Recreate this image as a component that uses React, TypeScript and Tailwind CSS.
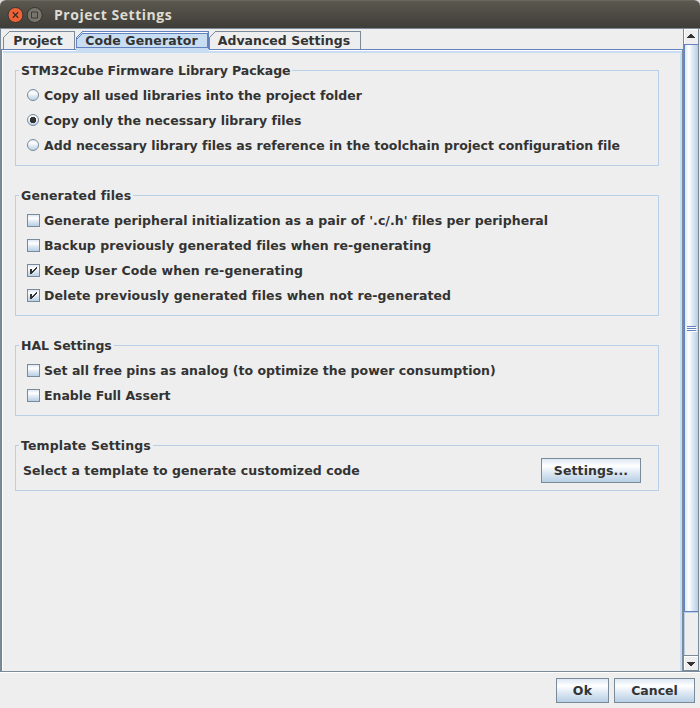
import type { ReactNode } from "react";

const metal = "bg-[linear-gradient(to_bottom,#dde8f3_0%,#ffffff_30%,#dde8f3_60%,#b8cfe5_100%)]";

function Group({ title, tracking, children }: { title: string; tracking: string; children: ReactNode }) {
  return (
    <fieldset className="w-[644px] border border-[#b8cfe5] pt-[5px] pb-[7px]">
      <legend className={`ml-[3px] h-[15px] px-[2px] leading-[15px] ${tracking}`}>{title}</legend>
      {children}
    </fieldset>
  );
}

function Radio({ label, tracking, on = false }: { label: string; tracking: string; on?: boolean }) {
  return (
    <label className="flex h-[25px] items-center pl-[11px] leading-[25px]">
      <svg width="12" height="12" viewBox="0 0 12 12" className="mr-[5px] mb-px shrink-0">
        <defs>
          <linearGradient id="radioFill" x1="0" y1="0" x2="0" y2="1">
            <stop offset="0" stopColor="#dde8f3" />
            <stop offset="0.3" stopColor="#ffffff" />
            <stop offset="0.6" stopColor="#dde8f3" />
            <stop offset="1" stopColor="#b8cfe5" />
          </linearGradient>
        </defs>
        <circle cx="6" cy="6" r="5.5" fill="url(#radioFill)" stroke="#7a8a99" />
        {on && <path d="M4 3h4v1h1v4h-1v1h-4v-1h-1v-4h1z" fill="#333" shapeRendering="crispEdges" />}
      </svg>
      <span className={tracking}>{label}</span>
    </label>
  );
}

function Check({ label, tracking, on = false }: { label: string; tracking: string; on?: boolean }) {
  return (
    <label className="flex h-[25px] items-center pl-[11px] leading-[25px]">
      <span className={`mr-[4px] h-[13px] w-[13px] shrink-0 border border-[#7a8a99] ${metal}`}>
        {on && (
          <svg className="block" width="11" height="11" viewBox="0 0 11 11" shapeRendering="crispEdges" fill="#333">
            <path d="M2 4h2v5H2zM8 2h1v2H8zM7 3h1v2H7zM6 4h1v2H6zM5 5h1v2H5zM4 6h1v2H4z" />
          </svg>
        )}
      </span>
      <span className={tracking}>{label}</span>
    </label>
  );
}

function Button({ label, size }: { label: string; size: string }) {
  return (
    <button className={`h-[25px] border border-[#7a8a99] text-center leading-[23px] ${size} ${metal}`}>{label}</button>
  );
}

function Tab({ label, size }: { label: string; size: string }) {
  return (
    <div className={`relative h-[18px] border-t border-r border-[#7a8a99] pr-px text-center leading-[18px] ${size}`}>
      <svg className="absolute -top-px left-0" width="7" height="18" viewBox="0 0 7 18" shapeRendering="crispEdges">
        <path d="M0 0h6L0 6z" fill="#eee" />
        <path d="M.5 18V6.5L6.5 .5" fill="none" stroke="#7a8a99" />
      </svg>
      {label}
    </div>
  );
}

function ActiveTab({ label, size }: { label: string; size: string }) {
  return (
    <div className={`relative z-10 h-[20px] pt-px pr-[2px] text-center leading-[18px] ${size}`}>
      <svg className="absolute top-0 left-0" width="133" height="20" viewBox="0 0 133 20" shapeRendering="crispEdges" fill="none">
        <path d="M0 20V6L6 0H133V20z" fill="#c8ddf2" />
        <path d="M1.5 7.5L7.5 1.5H131" stroke="#fff" />
        <path d="M.5 17V6.5L6.5 .5H132.5V18" stroke="#6382bf" />
        <path d="M.5 16.5V8.5L6.5 2.5H131.5V16.5z" stroke="#6382bf" />
      </svg>
      <span className="relative">{label}</span>
    </div>
  );
}

export default function App() {
  return (
    <div className="flex h-[708px] w-[700px] flex-col overflow-hidden bg-[#eee] font-['DejaVu_Sans',sans-serif] text-[12.5px] font-bold whitespace-nowrap text-[#333]">
      <div className="bg-[#dadada]">
        <header className="flex h-7 items-center rounded-t-[6px] border-t border-[#6a675f] bg-[linear-gradient(to_bottom,#5b584f,#3e3d38)] pl-[7px]">
          <svg width="37" height="18" viewBox="0 0 37 18">
            <circle cx="8.5" cy="9" r="7.5" fill="#ef6136" stroke="#343330" />
            <path d="M5.8 6.3l5.4 5.4M11.2 6.3l-5.4 5.4" stroke="#3c302a" strokeWidth="1.3" />
            <circle cx="27.7" cy="9" r="7.5" fill="#77756c" stroke="#343330" />
            <path d="M24.5 6h6v6h-6z" fill="none" stroke="#3b3a36" />
          </svg>
          <span className="ml-[10px] font-['Open_Sans',sans-serif] text-[14px] leading-[20px] tracking-[0.53px] text-[#dfdbd2]">Project Settings</span>
        </header>
      </div>
      <main className="flex h-[644px] border-t border-b border-l border-[#7a8a99]">
        <section className="flex w-[682px] flex-col">
          <nav className="flex h-5 pt-[2px] pl-[2px]">
            <Tab label="Project" size="w-[72px] tracking-[-0.07px]" />
            <ActiveTab label="Code Generator" size="ml-px w-[133px] tracking-[0.11px]" />
            <Tab label="Advanced Settings" size="w-[152px]" />
          </nav>
          <div className="flex-1 border-t border-r border-l border-t-[#6382bf] border-r-[#7a8a99] border-l-[#6382bf]">
            <div className="h-full border-t border-l border-white">
              <div className="flex h-full flex-col gap-[22px] border-t-2 border-r-2 border-[#c8ddf2] pt-[10px] pl-[12px]">
                <Group title="STM32Cube Firmware Library Package" tracking="tracking-[-0.06px]">
                  <Radio label="Copy all used libraries into the project folder" tracking="tracking-[0.01px]" />
                  <Radio label="Copy only the necessary library files" tracking="tracking-[0.01px]" on />
                  <Radio label="Add necessary library files as reference in the toolchain project configuration file" tracking="tracking-[0.005px]" />
                </Group>
                <Group title="Generated files" tracking="tracking-[0.12px]">
                  <Check label="Generate peripheral initialization as a pair of '.c/.h' files per peripheral" tracking="tracking-[0.045px]" />
                  <Check label="Backup previously generated files when re-generating" tracking="tracking-[0.05px]" />
                  <Check label="Keep User Code when re-generating" tracking="tracking-[0.11px]" on />
                  <Check label="Delete previously generated files when not re-generated" tracking="tracking-[0.09px]" on />
                </Group>
                <Group title="HAL Settings" tracking="tracking-[-0.065px]">
                  <Check label="Set all free pins as analog (to optimize the power consumption)" tracking="tracking-[0.02px]" />
                  <Check label="Enable Full Assert" tracking="tracking-[-0.02px]" />
                </Group>
                <Group title="Template Settings" tracking="tracking-[0.12px]">
                  <div className="flex h-[25px] items-center justify-between pr-[17px] pl-[7px] leading-[25px]">
                    <span className="tracking-[0.065px]">Select a template to generate customized code</span>
                    <Button label="Settings..." size="w-[100px] tracking-[0.1px]" />
                  </div>
                </Group>
              </div>
            </div>
          </div>
        </section>
        <aside className="flex w-4 flex-col border-r border-l border-[#7a8a99]">
          <div className="h-[15px] border-t border-l border-white pt-[4px] pl-[2px]">
            <svg className="block" width="8" height="4" viewBox="0 0 8 4" shapeRendering="crispEdges"><path d="M3 0h2v1h1v1h1v1h1v1H0V3h1V2h1V1h1z" fill="#333" /></svg>
          </div>
          <div className="flex h-[568px] items-center border-t border-b border-l border-[#6382bf] bg-[linear-gradient(to_right,#dde8f3,#ffffff_30%,#dde8f3_60%,#b8cfe5)] pt-[2px] pl-[2px]">
            <svg width="10" height="6" viewBox="0 0 10 6" shapeRendering="crispEdges"><path d="M1 1h9v1H1zM1 3h9v1H1zM1 5h9v1H1z" fill="#fff" /><path d="M0 0h9v1H0zM0 2h9v1H0zM0 4h9v1H0z" fill="#6382bf" /></svg>
          </div>
          <div className="h-[43px] border-t border-l border-[#b8cfe5]" />
          <div className="flex-1 border-t border-b border-[#7a8a99]">
            <div className="h-full border-t border-l border-white pt-[5px] pl-[2px]">
              <svg className="block" width="8" height="4" viewBox="0 0 8 4" shapeRendering="crispEdges"><path d="M0 0h8v1H7v1H6v1H5v1H3V3H2V2H1V1H0z" fill="#333" /></svg>
            </div>
          </div>
        </aside>
      </main>
      <footer className="flex flex-1 justify-end gap-[5px] border-t border-white pt-[5px] pr-[5px]">
        <Button label="Ok" size="w-[53px] tracking-[0.33px]" />
        <Button label="Cancel" size="w-[81px]" />
      </footer>
    </div>
  );
}
